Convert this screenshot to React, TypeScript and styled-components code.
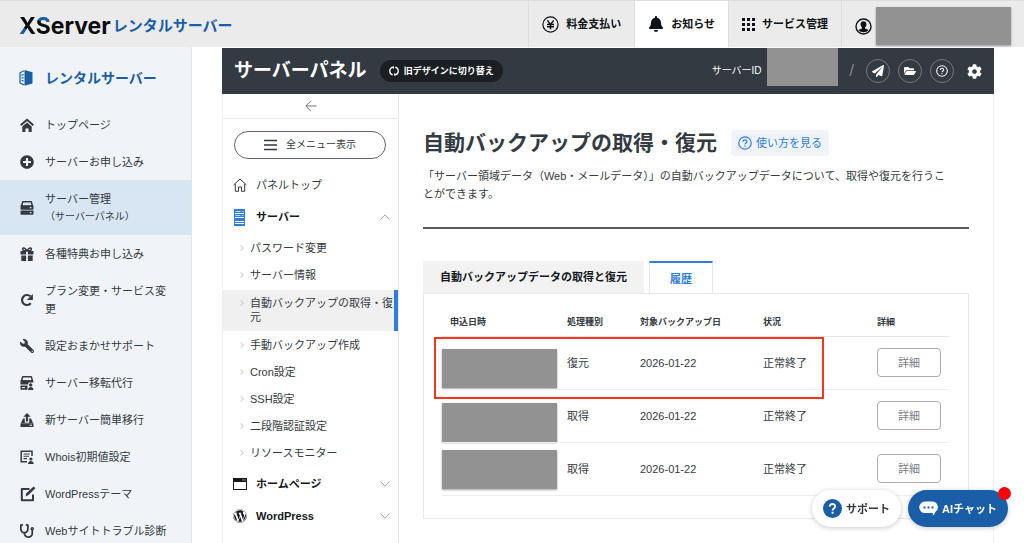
import React from "react";
import styled, { createGlobalStyle, css } from "styled-components";
import {
  FaBell,
  FaPaperPlane,
  FaFolderOpen,
  FaCog,
  FaWrench,
  FaPlusCircle,
  FaStethoscope,
  FaWordpress,
} from "react-icons/fa";

const ink = "#343a42";
const navy = "#1b5ea8";
const blue = "#2f7de0";
const mask = "#929292";

const GlobalStyle = createGlobalStyle`
  * { box-sizing: border-box; }
  body {
    margin: 0;
    background: #fff;
    color: ${ink};
    font-family: "Liberation Sans", "Noto Sans CJK JP", sans-serif;
    font-size: 11px;
    line-height: 18px;
  }
  a { color: inherit; text-decoration: none; }
  button { font: inherit; color: inherit; cursor: pointer; }
  ul { list-style: none; margin: 0; padding: 0; }
  svg { display: block; flex: none; }
`;

const Page = styled.div`
  display: flex;
  flex-direction: column;
  height: 100vh;
  overflow: hidden;
`;

/* ---------- global header ---------- */

const TopBar = styled.header`
  display: flex;
  align-items: stretch;
  justify-content: space-between;
  flex: none;
  height: 47px;
  background: #ebebeb;
  border-top: 1px solid #dedede;
`;

const Logo = styled.a`
  display: flex;
  align-items: center;
  gap: 2px;
  padding: 3px 0 0 19px;
  font-weight: 700;
`;

const Brand = styled.span`
  font-family: Inter, "Liberation Sans", sans-serif;
  font-size: 23px;
  line-height: 28px;
  color: #0b0d10;
`;

const BrandLetter = styled.span<{ $fill: string }>`
  background: ${(p) => p.$fill};
  -webkit-background-clip: text;
  background-clip: text;
  color: transparent;
`;

const Service = styled.span`
  font-size: 15px;
  line-height: 22px;
  color: ${navy};
`;

const TopNav = styled.nav`
  display: flex;
`;

const TopLink = styled.a<{ $active?: boolean }>`
  display: flex;
  align-items: center;
  gap: 7px;
  padding: 0 13px;
  border-left: 1px solid #dcdcdc;
  background: ${(p) => (p.$active ? "#fff" : "transparent")};
  color: #0f1216;
  font-size: 11px;
  font-weight: 700;
  white-space: nowrap;
`;

const Account = styled(TopLink)`
  gap: 4px;
  padding: 4px 13px 0 13px;
`;

const Mask = styled.span<{ $w: number; $h: number }>`
  display: block;
  flex: none;
  width: ${(p) => p.$w}px;
  height: ${(p) => p.$h}px;
  background: ${mask};
  box-shadow: 0 1px 2px rgba(60, 70, 90, 0.5);
`;

/* ---------- service side bar ---------- */

const Body = styled.div`
  display: flex;
  flex: 1;
  min-height: 0;
`;

const SideBar = styled.nav`
  flex: none;
  width: 192px;
  background: #f0f4f8;
  border-right: 1px solid #dfe5eb;
`;

const SideTitle = styled.a`
  display: flex;
  align-items: center;
  gap: 12px;
  height: 59px;
  padding: 2px 0 0 19px;
  color: ${navy};
  font-size: 14px;
  font-weight: 700;
`;

const SideLink = styled.a<{ $active?: boolean }>`
  display: flex;
  align-items: center;
  gap: 11px;
  padding: 10px 16px 9px 20px;
  background: ${(p) => (p.$active ? "#d8e5f2" : "transparent")};
`;

const SideIcon = styled.span`
  display: block;
  flex: none;
  width: 14px;
`;

const Note = styled.span`
  display: block;
  font-size: 10px;
`;

/* ---------- server panel ---------- */

const Panel = styled.div`
  display: flex;
  flex-direction: column;
  flex: 1;
  min-width: 0;
  margin: 1px 30px 0;
`;

const PanelBar = styled.div`
  display: flex;
  align-items: center;
  flex: none;
  height: 46px;
  padding: 0 12px;
  background: ${ink};
  color: #fff;
`;

const PanelName = styled.span`
  font-size: 19px;
  line-height: 28px;
  font-weight: 700;
`;

const SwitchButton = styled.button`
  display: flex;
  align-items: center;
  gap: 5px;
  height: 22px;
  margin-left: 13px;
  padding: 0 9px;
  border: 0;
  border-radius: 11px;
  background: #1b1f24;
  font-size: 9px;
  font-weight: 700;
`;

const ServerId = styled.div`
  display: flex;
  align-items: center;
  align-self: stretch;
  gap: 5px;
  margin-left: auto;
  font-size: 10px;
`;

const IdMask = styled(Mask)`
  align-self: flex-start;
`;

const Slash = styled.span`
  margin: 0 12px;
  color: #85898f;
  font-size: 16px;
`;

const Tools = styled.div`
  display: flex;
  align-items: center;
  gap: 8px;
`;

const Tool = styled.button<{ $plain?: boolean }>`
  display: grid;
  place-items: center;
  width: ${(p) => (p.$plain ? 16 : 24)}px;
  height: 24px;
  margin-left: ${(p) => (p.$plain ? 4 : 0)}px;
  padding: 0;
  border: ${(p) => (p.$plain ? "0" : "1px solid #767a80")};
  border-radius: 50%;
  background: none;
`;

const PanelBody = styled.div`
  display: flex;
  flex: 1;
  min-height: 0;
  border: solid #eeeff0;
  border-width: 0 1px;
`;

const Menu = styled.nav`
  flex: none;
  width: 176px;
  border-right: 1px solid #e8e9ea;
`;

const Collapse = styled.button`
  display: grid;
  place-items: center;
  width: 100%;
  height: 25px;
  padding: 0;
  border: 0;
  border-bottom: 1px solid #e8e9ea;
  background: none;
`;

const AllMenu = styled.button`
  display: flex;
  align-items: center;
  justify-content: center;
  gap: 9px;
  width: 152px;
  height: 28px;
  margin: 12px 11px 10px;
  border: 1px solid #5d636b;
  border-radius: 14px;
  background: #fff;
  font-size: 10px;
`;

const Group = styled.a<{ $bold?: boolean }>`
  display: flex;
  align-items: center;
  height: 32px;
  padding: 0 8px 0 9px;
  ${(p) =>
    p.$bold &&
    css`
      color: #14181d;
      font-weight: 700;
    `}
`;

const GroupIcon = styled.span`
  display: grid;
  justify-items: center;
  width: 15px;
  margin-right: 9px;
`;

const GroupLabel = styled.span`
  flex: 1;
`;

const SubList = styled.ul`
  margin: 2px 0 1px;
`;

const SubLink = styled.a<{ $active?: boolean }>`
  display: flex;
  gap: 6px;
  padding: 6px 0 7px 17px;
  line-height: 14px;
  ${(p) =>
    p.$active &&
    css`
      margin: 1px 0;
      background: #f0f0f0;
      border-right: 4px solid ${blue};
    `}
`;

const SubMark = styled.span`
  padding-top: 4px;
`;

const Content = styled.main`
  flex: 1;
  min-width: 0;
  padding: 35px 24px 0;
`;

const Heading = styled.div`
  display: flex;
  align-items: center;
  gap: 14px;
  height: 28px;
`;

const Title = styled.h1`
  margin: 0;
  font-size: 21px;
  line-height: 28px;
`;

const Help = styled.a`
  display: flex;
  align-items: center;
  gap: 4px;
  height: 26px;
  padding: 0 7px;
  border-radius: 4px;
  background: #f0f4f8;
  color: ${blue};
`;

const Lead = styled.p`
  margin: 10px 0 24px;
  padding: 0 18px 24px 0;
  border-bottom: 2px solid #555a61;
`;

const Tabs = styled.div`
  display: flex;
  gap: 5px;
  margin-top: 32px;
`;

const Tab = styled.button<{ $active?: boolean }>`
  height: 32px;
  padding: 0 17px;
  border: 0;
  background: #f2f2f2;
  color: #14181d;
  font-size: 11px;
  font-weight: 700;
  ${(p) =>
    p.$active &&
    css`
      position: relative;
      height: 33px;
      margin-bottom: -1px;
      padding: 0 20px;
      border: solid #e8e9ea;
      border-width: 2px 1px 0;
      border-top-color: ${blue};
      background: #fff;
      color: ${blue};
    `}
`;

const Card = styled.section`
  position: relative;
  padding: 14px 20px 22px 18px;
  border: 1px solid #e8e9ea;
`;

const Table = styled.table`
  width: 100%;
  border-collapse: collapse;
  table-layout: fixed;
`;

const Th = styled.th<{ $w: number }>`
  width: ${(p) => p.$w}px;
  height: 28px;
  padding: 0 8px;
  border-bottom: 1px solid #e4e5e7;
  font-size: 9px;
  text-align: left;
  white-space: nowrap;
`;

const Td = styled.td`
  height: 53px;
  padding: 0 8px;
  border-bottom: 1px solid #eeeff1;
  white-space: nowrap;
`;

const DateTd = styled(Td)<{ $drop: number }>`
  padding: 0 0 ${(p) => p.$drop}px;
  vertical-align: bottom;
`;

const Detail = styled.button`
  display: block;
  width: 64px;
  height: 29px;
  padding: 0;
  border: 1px solid #a9adb3;
  border-radius: 4px;
  background: #fff;
  color: #7b7f85;
`;

const Marker = styled.div`
  position: absolute;
  top: 43px;
  left: 10px;
  right: 144px;
  height: 62px;
  border: 2px solid #f5371c;
  pointer-events: none;
`;

/* ---------- floating help ---------- */

const Floating = styled.div`
  position: fixed;
  right: 16px;
  bottom: 16px;
  display: flex;
  gap: 7px;
`;

const Pill = styled.button<{ $dark?: boolean }>`
  position: relative;
  display: flex;
  align-items: center;
  gap: 4px;
  height: 37px;
  padding: 0 11px;
  border: 0;
  border-radius: 19px;
  background: ${(p) => (p.$dark ? navy : "#fff")};
  color: ${(p) => (p.$dark ? "#fff" : ink)};
  box-shadow: 0 1px 5px rgba(0, 0, 0, 0.22);
  font-size: 11px;
  font-weight: 700;
  white-space: nowrap;
`;

const Dot = styled.span`
  position: absolute;
  top: -3px;
  right: -3px;
  width: 13px;
  height: 13px;
  border-radius: 50%;
  background: #fb0007;
`;

/* ---------- icons ---------- */

type IconProps = { size?: number; children: React.ReactNode; box?: string; h?: number };
const Icon = ({ size = 14, h, box = "0 0 14 14", children }: IconProps) => (
  <svg width={size} height={h ?? size} viewBox={box} fill="none" stroke="currentColor" aria-hidden="true">
    {children}
  </svg>
);

const YenIcon = () => (
  <Icon size={17} box="0 0 17 17">
    <circle cx="8.5" cy="8.5" r="7.6" strokeWidth="1.2" />
    <path d="M5.4 4.4 8.5 8.6 11.6 4.4M8.5 8.6v4.6M5 8.6h7M5 10.7h7" strokeWidth="1.5" />
  </Icon>
);

const GridIcon = () => (
  <Icon size={13} box="0 0 13 13">
    {[0, 5, 10].map((y) =>
      [0, 5, 10].map((x) => (
        <rect key={`${x}-${y}`} x={x} y={y} width="3" height="3" fill="currentColor" stroke="none" />
      ))
    )}
  </Icon>
);

const UserIcon = () => (
  <Icon size={17} box="0 0 17 17">
    <circle cx="8.5" cy="8.5" r="7.5" strokeWidth="1.4" />
    <path
      d="M8.5 3.2c1.9 0 2.9 1.3 2.9 3 0 1.3-.5 2.4-1.3 3.1v1.1l3.6 1.6a7 7 0 0 1-10.4 0l3.6-1.6V9.3C6.1 8.6 5.6 7.500 5.6 6.2c0-1.7 1-3 2.900-3z"
      fill="currentColor"
      stroke="none"
    />
  </Icon>
);

const ServiceIcon = () => (
  <Icon size={14} h={16} box="0 0 14 16">
    <path d="M5.5 0 13.5 2.2V13.5L5.5 15.8z" fill="currentColor" stroke="none" />
    <path d="M5 .8 1 2.8v10l4 2.2" strokeWidth="1.2" />
    <path d="M2.4 5.2 4.6 4.6M2.4 7.9h2.2M2.4 10.5l2.2.4" strokeWidth="1.2" />
  </Icon>
);

const HomeSolid = () => (
  <Icon>
    <path d="M.7 7.2 7 1.7l6.3 5.5" strokeWidth="1.9" />
    <path d="M2.3 8.5 7 4.5l4.700 4V14H8.6v-3.4H5.4V14H2.3z" fill="currentColor" stroke="none" />
  </Icon>
);

const ServerSolid = () => (
  <Icon>
    <path d="M2.7.8h8.6L12.5 5.500H1.5z" strokeWidth="1.5" strokeLinejoin="round" />
    <rect x=".5" y="4.3" width="13" height="4.4" rx=".8" fill="currentColor" stroke="none" />
    <rect x=".5" y="9.4" width="13" height="4.400" rx=".8" fill="currentColor" stroke="none" />
    <path d="M9.8 6.6h1.6M9.8 11.6h1.6" stroke="#d8e5f2" strokeWidth="1.1" />
  </Icon>
);

const GiftIcon = () => (
  <Icon>
    <path d="M7 4C5.6 1 3.2 0 2.7 1.8 2.3 3.3 4 4 7 4zM7 4c1.4-3 3.8-4 4.3-2.2C11.7 3.3 10 4 7 4z" strokeWidth="1.5" />
    <path d="M.5 4h5.6v3.5H.5zM7.9 4h5.6v3.5H7.9zM1.3 8.5h4.8V14H1.3zM7.9 8.5h4.8V14H7.9z" fill="currentColor" stroke="none" />
  </Icon>
);

const RedoIcon = () => (
  <Icon>
    <path d="M10.8 10.3a5 5 0 1 1-.4-7" strokeWidth="2.2" />
    <path d="M12.9.9v6.1H6.8z" fill="currentColor" stroke="none" />
  </Icon>
);

const TransferIcon = () => (
  <Icon>
    <path d="M2.7.8h8.600l1.200 4.200H1.5z" strokeWidth="1.5" strokeLinejoin="round" />
    <path d="M.5 4.2h12.8v2.4H8.700l-.6 2H.5zM.5 9.400h7v4.400h-7z" fill="currentColor" stroke="none" />
    <path d="M2 11.600h3" stroke="#f0f4f8" />
    <circle cx="10.7" cy="8.9" r="1.7" fill="currentColor" stroke="none" />
    <path d="M8 14c0-4 5.5-4 5.5 0z" fill="currentColor" stroke="none" />
  </Icon>
);

const UploadIcon = () => (
  <Icon>
    <path d="M7 0l3.7 3.8H8.1v4.7H5.9V3.8H3.3zM3 5.5h1.8v4.2h4.4V5.5H11l2 4.5H1zM.5 10.3h13V14H.5z" fill="currentColor" stroke="none" />
    <path d="M9.5 12.2h2.5" stroke="#f0f4f8" />
  </Icon>
);

const WhoisIcon = () => (
  <Icon>
    <path d="M12 6V1.2H1.2v10.6H7" strokeWidth="1.5" />
    <path d="M3.5 4h6.2M3.5 6.3h5.5M3.5 8.6H7" strokeWidth="1.1" />
    <circle cx="10.9" cy="9" r="1.6" fill="currentColor" stroke="none" />
    <path d="M8 14c0-4 5.7-4 5.7 0z" fill="currentColor" stroke="none" />
  </Icon>
);

const EditIcon = () => (
  <Icon size={16} box="0 0 16 16">
    <path d="M9.5 3H1.8v11.2h11.2V8.5" strokeWidth="2" strokeLinejoin="round" />
    <path d="M5.6 10.4 6.3 7.300 13.6.5l1.8 1.700-7.2 7z" fill="currentColor" stroke="none" />
  </Icon>
);

const SwapIcon = () => (
  <Icon size={10} box="0 0 10 10">
    <path d="M6.3 1.1A4 4 0 0 1 6 8.9M3.7 8.9A4 4 0 0 1 4 1.1" strokeWidth="1.2" />
    <path d="M5 0v3L2.9 1.5zM5 7v3l2.1-1.5z" fill="currentColor" stroke="none" />
  </Icon>
);

const QuestionIcon = ({ size = 12 }: { size?: number }) => (
  <Icon size={size}>
    <circle cx="7" cy="7" r="6.2" strokeWidth="1.2" />
    <path d="M5.1 5.7c0-2.5 3.9-2.4 3.8 0C8.9 7 7 7 7 8.5M7 9.5v1.3" strokeWidth="1.2" />
  </Icon>
);

const BackIcon = () => (
  <Icon size={12} box="0 0 12 12">
    <path d="M11.5 6H1M6 .8.8 6 6 11.2" stroke="#70757b" />
  </Icon>
);

const BarsIcon = () => (
  <Icon size={13} h={12} box="0 0 13 12">
    <path d="M0 1.5h13M0 6h13M0 10.5h13" strokeWidth="1.5" />
  </Icon>
);

const HomeLine = () => (
  <Icon>
    <path d="M.6 7 7 1l6.4 6M2.3 5.8v7.5h3.2V9h3v4.3h3.2V5.8" />
  </Icon>
);

const RackIcon = () => (
  <Icon size={11} h={17} box="0 0 11 17">
    <rect width="11" height="17" fill={blue} stroke="none" />
    <path d="M1 4.5h9M1 8.5h9M1 12.500h9M1 14.500h9" stroke="#fff" />
    <path d="M1.500 2.500h5M1.500 6.500h5M8 2.500h1.500M8 6.500h1.500" stroke="#bcd7f7" />
  </Icon>
);

const WindowIcon = () => (
  <Icon size={14} h={12} box="0 0 14 12">
    <rect x=".5" y=".5" width="13" height="11" />
    <path d="M.5.5h13v3H.5z" fill="currentColor" />
    <path d="M9.5 2h1M11.5 2h1" stroke="#fff" />
  </Icon>
);

const Chevron = ({ up }: { up?: boolean }) => (
  <Icon size={10} h={6} box="0 0 10 6">
    <path d={up ? "M.6 5.4 5 .9l4.4 4.5" : "M.6.6 5 5.1 9.4.6"} stroke="#a5a9ae" />
  </Icon>
);

const SmallMark = () => (
  <Icon size={4} h={6} box="0 0 4 6">
    <path d="M.5.3 3.3 3 .5 5.7" stroke="#b0b3b7" strokeWidth=".8" />
  </Icon>
);

const SupportIcon = () => (
  <Icon size={19} box="0 0 19 19">
    <circle cx="9.5" cy="9.5" r="9.5" fill={navy} stroke="none" />
    <path d="M6.8 7.5c0-3.4 5.5-3.3 5.4 0C12.2 9.2 9.6 9.3 9.6 11.5M9.6 12.7v2" stroke="#fff" strokeWidth="1.9" />
  </Icon>
);

const ChatIcon = () => (
  <Icon size={19} h={15} box="0 0 19 15">
    <path d="M6 .5h7a5.8 5.8 0 0 1 3.3 10.6c-.2 1.5-1 2.9-2.7 3.7.4-1 .4-1.9.1-2.7H6A5.8 5.8 0 0 1 6 .5z" fill="#fff" stroke="none" />
    <path d="M4.5 6.5h2M8.5 6.5h2M12.5 6.5h2" stroke={navy} strokeWidth="2" />
  </Icon>
);

/* ---------- data ---------- */

const sideLinks: { icon: React.ReactNode; label: string; note?: string }[] = [
  { icon: <HomeSolid />, label: "トップページ" },
  { icon: <FaPlusCircle size={14} />, label: "サーバーお申し込み" },
  { icon: <ServerSolid />, label: "サーバー管理", note: "（サーバーパネル）" },
  { icon: <GiftIcon />, label: "各種特典お申し込み" },
  { icon: <RedoIcon />, label: "プラン変更・サービス変更" },
  { icon: <FaWrench size={14} style={{ transform: "scaleX(-1)" }} />, label: "設定おまかせサポート" },
  { icon: <TransferIcon />, label: "サーバー移転代行" },
  { icon: <UploadIcon />, label: "新サーバー簡単移行" },
  { icon: <WhoisIcon />, label: "Whois初期値設定" },
  { icon: <EditIcon />, label: "WordPressテーマ" },
  { icon: <FaStethoscope size={14} />, label: "Webサイトトラブル診断" },
];

const subLinks = [
  "パスワード変更",
  "サーバー情報",
  "自動バックアップの取得・復元",
  "手動バックアップ作成",
  "Cron設定",
  "SSH設定",
  "二段階認証設定",
  "リソースモニター",
];

const rows = [
  { kind: "復元", date: "2026-01-22", state: "正常終了", drop: 1 },
  { kind: "取得", date: "2026-01-22", state: "正常終了", drop: 0 },
  { kind: "取得", date: "2026-01-22", state: "正常終了", drop: 6 },
];

export default function App() {
  return (
    <Page>
      <GlobalStyle />
      <TopBar>
        <Logo href="#">
          <Brand>
            <BrandLetter $fill={`linear-gradient(35deg, ${navy} 38%, #0b0d10 39%)`}>X</BrandLetter>
            <BrandLetter $fill={`linear-gradient(200deg, ${navy} 38%, #0b0d10 39%)`}>S</BrandLetter>
            erver
          </Brand>
          <Service>レンタルサーバー</Service>
        </Logo>
        <TopNav>
          <TopLink href="#"><YenIcon />料金支払い</TopLink>
          <TopLink href="#" $active><FaBell size={16} />お知らせ</TopLink>
          <TopLink href="#"><GridIcon />サービス管理</TopLink>
          <Account href="#" aria-label="アカウント"><UserIcon /><Mask $w={135} $h={38} /></Account>
        </TopNav>
      </TopBar>

      <Body>
        <SideBar>
          <SideTitle href="#"><ServiceIcon />レンタルサーバー</SideTitle>
          <ul>
            {sideLinks.map((l) => (
              <li key={l.label}>
                <SideLink href="#" $active={!!l.note}>
                  <SideIcon>{l.icon}</SideIcon>
                  <span>
                    {l.label}
                    {l.note && <Note>{l.note}</Note>}
                  </span>
                </SideLink>
              </li>
            ))}
          </ul>
        </SideBar>

        <Panel>
          <PanelBar>
            <PanelName>サーバーパネル</PanelName>
            <SwitchButton><SwapIcon />旧デザインに切り替え</SwitchButton>
            <ServerId>サーバーID<IdMask $w={71} $h={38} /></ServerId>
            <Slash>/</Slash>
            <Tools>
              <Tool aria-label="送信"><FaPaperPlane size={12} /></Tool>
              <Tool aria-label="ファイル"><FaFolderOpen size={12} /></Tool>
              <Tool aria-label="ヘルプ"><QuestionIcon /></Tool>
              <Tool $plain aria-label="設定"><FaCog size={15} /></Tool>
            </Tools>
          </PanelBar>

          <PanelBody>
            <Menu>
              <Collapse aria-label="閉じる"><BackIcon /></Collapse>
              <AllMenu><BarsIcon />全メニュー表示</AllMenu>
              <Group href="#"><GroupIcon><HomeLine /></GroupIcon><GroupLabel>パネルトップ</GroupLabel></Group>
              <Group href="#" $bold><GroupIcon><RackIcon /></GroupIcon><GroupLabel>サーバー</GroupLabel><Chevron up /></Group>
              <SubList>
                {subLinks.map((s, i) => (
                  <li key={s}>
                    <SubLink href="#" $active={i === 2}><SubMark><SmallMark /></SubMark><span>{s}</span></SubLink>
                  </li>
                ))}
              </SubList>
              <Group href="#" $bold><GroupIcon><WindowIcon /></GroupIcon><GroupLabel>ホームページ</GroupLabel><Chevron /></Group>
              <Group href="#" $bold><GroupIcon><FaWordpress size={14} /></GroupIcon><GroupLabel>WordPress</GroupLabel><Chevron /></Group>
            </Menu>

            <Content>
              <Heading>
                <Title>自動バックアップの取得・復元</Title>
                <Help href="#"><QuestionIcon size={14} />使い方を見る</Help>
              </Heading>
              <Lead>「サーバー領域データ（Web・メールデータ）」の自動バックアップデータについて、取得や復元を行うことができます。</Lead>

              <Tabs role="tablist">
                <Tab role="tab" aria-selected={false}>自動バックアップデータの取得と復元</Tab>
                <Tab role="tab" aria-selected $active>履歴</Tab>
              </Tabs>
              <Card>
                <Table>
                  <thead>
                    <tr>
                      <Th $w={117}>申込日時</Th>
                      <Th $w={73}>処理種別</Th>
                      <Th $w={123}>対象バックアップ日</Th>
                      <Th $w={114}>状況</Th>
                      <Th $w={80}>詳細</Th>
                    </tr>
                  </thead>
                  <tbody>
                    {rows.map((r, i) => (
                      <tr key={i}>
                        <DateTd $drop={r.drop}><Mask $w={115} $h={39} /></DateTd>
                        <Td>{r.kind}</Td>
                        <Td>{r.date}</Td>
                        <Td>{r.state}</Td>
                        <Td><Detail>詳細</Detail></Td>
                      </tr>
                    ))}
                  </tbody>
                </Table>
                <Marker />
              </Card>
            </Content>
          </PanelBody>
        </Panel>
      </Body>

      <Floating>
        <Pill><SupportIcon />サポート</Pill>
        <Pill $dark><ChatIcon />AIチャット<Dot /></Pill>
      </Floating>
    </Page>
  );
}
